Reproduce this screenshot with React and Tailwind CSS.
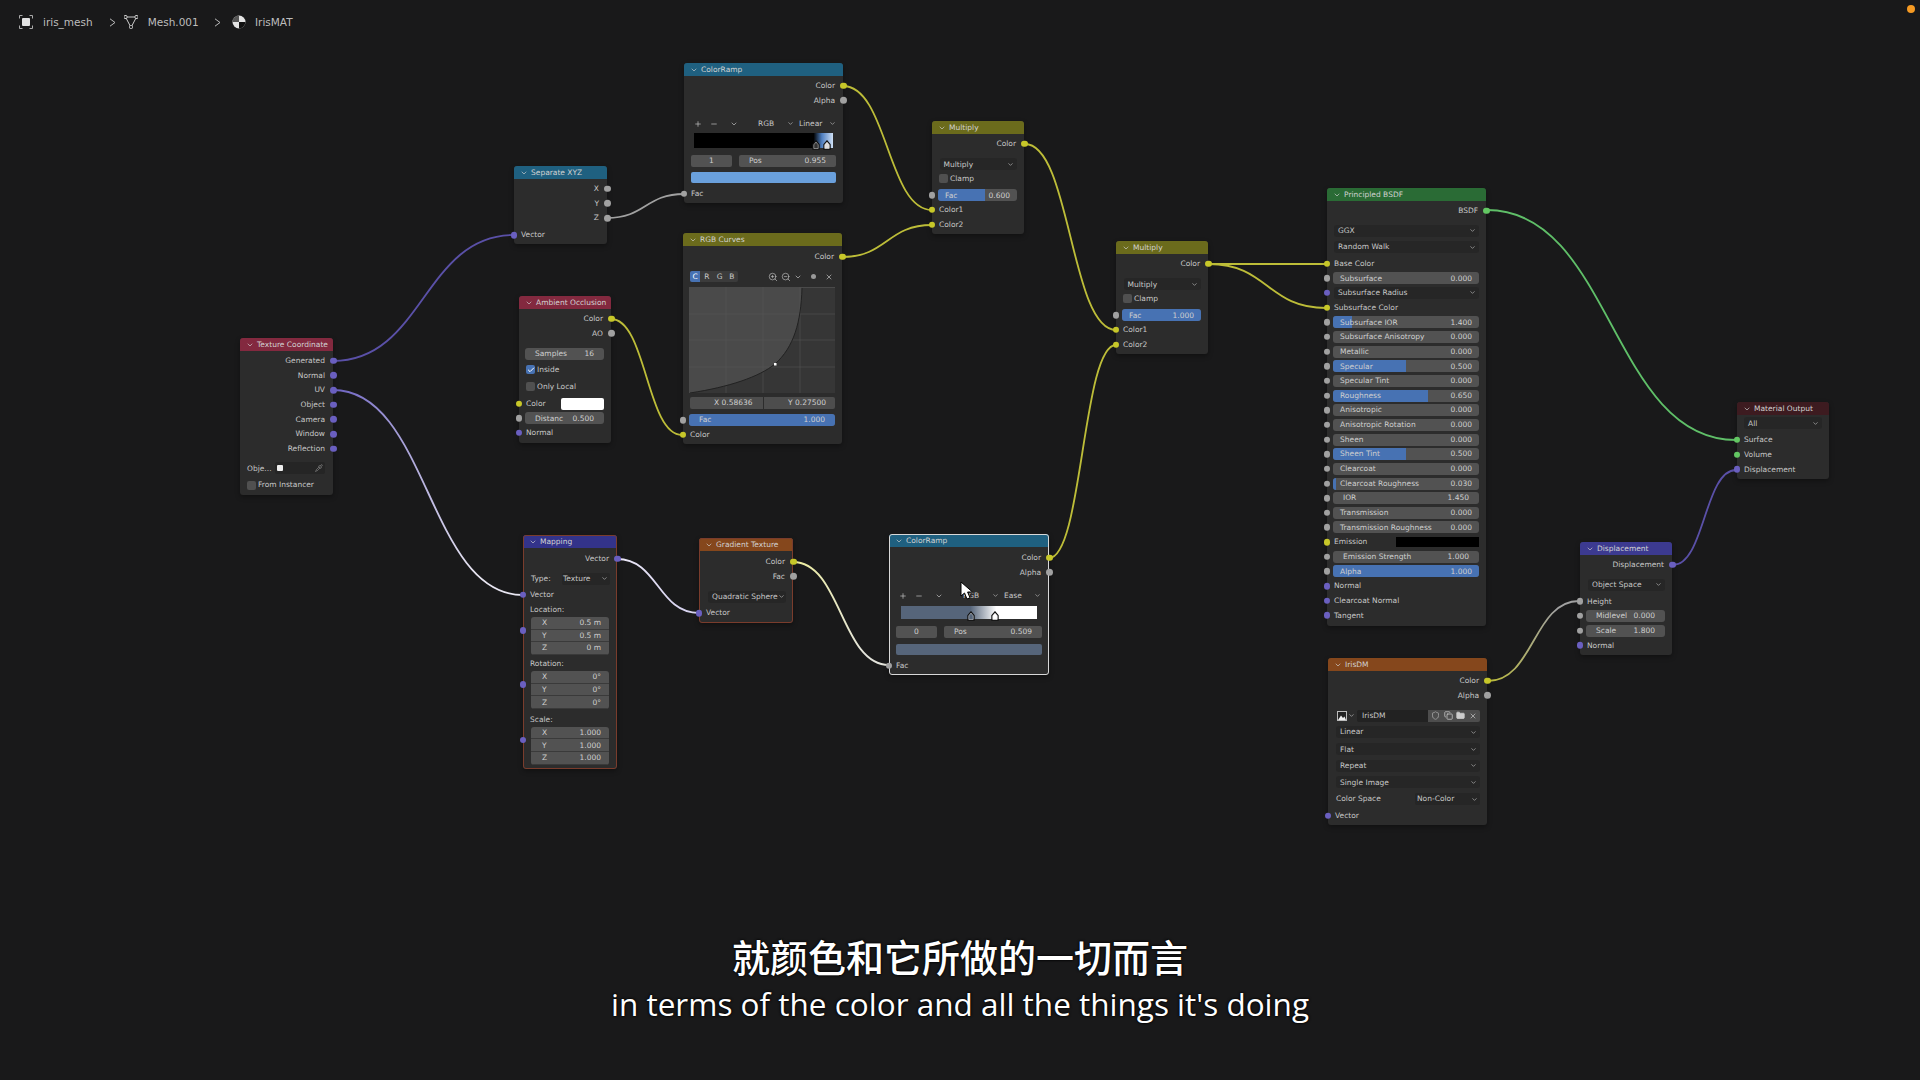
import { ChevronDown, Plus, Minus, X, Check, Pipette, Shield, Copy, Folder, ZoomIn, ZoomOut } from "lucide-react";

const socketColors = {
  yellow: "bg-[#c7c729]",
  grey: "bg-[#a1a1a1]",
  purple: "bg-[#6a5fc0]",
  green: "bg-[#63c763]",
};

const wires = [
  { id: "w1", from: [607, 218], to: [684, 194], a: "#a1a1a1", b: "#a1a1a1" },
  { id: "w2", from: [333, 361], to: [514, 235], a: "#5a50a8", b: "#5a50a8" },
  { id: "w3", from: [333, 390], to: [523, 595], a: "#6a5fc0", b: "#e8e6f2" },
  { id: "w4", from: [611, 319], to: [682, 435], a: "#bdbd38", b: "#bdbd38" },
  { id: "w5", from: [843, 86], to: [932, 210], a: "#bdbd38", b: "#bdbd38" },
  { id: "w6", from: [842, 257], to: [932, 225], a: "#bdbd38", b: "#bdbd38" },
  { id: "w7", from: [1025, 144], to: [1116, 330], a: "#bdbd38", b: "#bdbd38" },
  { id: "w8", from: [1049, 558], to: [1116, 345], a: "#bdbd38", b: "#bdbd38" },
  { id: "w9", from: [1209, 264], to: [1326, 264], a: "#bdbd38", b: "#bdbd38" },
  { id: "w10", from: [1209, 264], to: [1326, 308], a: "#bdbd38", b: "#bdbd38" },
  { id: "w11", from: [1487, 210], to: [1736, 440], a: "#5fbf68", b: "#5fbf68" },
  { id: "w12", from: [1673, 565], to: [1736, 470], a: "#5a50a8", b: "#5a50a8" },
  { id: "w13", from: [1488, 681], to: [1579, 601], a: "#bdbd38", b: "#a1a1a1" },
  { id: "w14", from: [617, 559], to: [699, 613], a: "#ece9f8", b: "#d8d4f0" },
  { id: "w15", from: [793, 562], to: [889, 665], a: "#eded9a", b: "#e4e4dc" },
];

const Socket = ({ color, side }) => (
  <span
    className={`absolute top-1/2 -translate-y-1/2 w-[6.5px] h-[6.5px] rounded-full ${socketColors[color]} ${
      side === "right" ? "right-[-3.5px]" : "left-[-3.5px]"
    }`}
  />
);

const Node = ({ title, head, className, outline, children }) => (
  <div className={`absolute rounded-[3px] bg-[#2c2c2c] shadow-[0_2px_5px_rgba(0,0,0,0.35)] ${outline || ""} ${className}`}>
    <div className={`flex h-[13px] items-center gap-[3px] rounded-t-[3px] pl-[6px] ${head}`}>
      <ChevronDown size={8} strokeWidth={2} className="text-[#d0d0d0] shrink-0" />
      <span className="text-[#d2d2d2] whitespace-nowrap">{title}</span>
    </div>
    <div className="pt-[2.5px]">{children}</div>
  </div>
);

const Out = ({ label, color, className }) => (
  <div className={`relative flex h-[14.67px] items-center justify-end pr-[8px] ${className || ""}`}>
    <span>{label}</span>
    <Socket color={color} side="right" />
  </div>
);

const In = ({ label, color, className }) => (
  <div className={`relative flex h-[14.67px] items-center pl-[7px] ${className || ""}`}>
    <span>{label}</span>
    <Socket color={color} side="left" />
  </div>
);

const Field = ({ label, value, fill, inset, className }) => (
  <div className={`relative flex h-[12px] items-center justify-between overflow-hidden rounded-[3px] bg-[#525252] ${inset ? "px-[10px]" : "px-[7px]"} ${className || ""}`}>
    {fill ? <span className="absolute inset-y-0 left-0 bg-[#4772b3]" style={{ width: `${fill}%` }} /> : null}
    <span className="relative whitespace-nowrap text-[#cfcfcf]">{label}</span>
    <span className="relative whitespace-nowrap text-[#cfcfcf]">{value}</span>
  </div>
);

const FieldRow = ({ label, value, fill, inset, socket = "grey", className }) => (
  <div className={`relative flex h-[14.67px] items-center pl-[6px] pr-[7px] ${className || ""}`}>
    <Field label={label} value={value} fill={fill} inset={inset} className="w-full" />
    {socket ? <Socket color={socket} side="left" /> : null}
  </div>
);

const Select = ({ label, className, socket }) => (
  <div className={`relative flex h-[14.67px] items-center pr-[7px] ${className || "pl-[7px]"}`}>
    <div className="flex h-[12px] w-full items-center justify-between rounded-[3px] bg-[#262626] pl-[4px] pr-[3px]">
      <span className="whitespace-nowrap">{label}</span>
      <ChevronDown size={7} strokeWidth={2} className="shrink-0" />
    </div>
    {socket ? <Socket color={socket} side="left" /> : null}
  </div>
);

const CheckRow = ({ label, on, className }) => (
  <div className={`flex h-[14.67px] items-center gap-[2px] pl-[7px] ${className || ""}`}>
    <span className={`flex h-[9px] w-[9px] items-center justify-center rounded-[2px] ${on ? "bg-[#4772b3]" : "bg-[#505050]"}`}>
      {on ? <Check size={8} strokeWidth={3} className="text-white" /> : null}
    </span>
    <span>{label}</span>
  </div>
);

const Group = ({ rows }) => (
  <div className="relative ml-[8px] mr-[8px] flex h-[38px] flex-col overflow-hidden rounded-[3px]">
    {rows.map(([k, v]) => (
      <div key={k} className="flex h-[12.67px] items-center justify-between border-b border-[#3a3a3a] bg-[#525252] pl-[11px] pr-[8px]">
        <span className="text-[#cfcfcf]">{k}</span>
        <span className="text-[#cfcfcf]">{v}</span>
      </div>
    ))}
  </div>
);

const GroupSocket = () => (
  <div className="relative h-0">
    <span className="absolute left-[-3.5px] top-[10px] h-[6.5px] w-[6.5px] rounded-full bg-[#6a5fc0]" />
  </div>
);

const RampTools = ({ mode, interp, className }) => (
  <div className={`flex h-[14.67px] items-center pl-[10px] ${className || ""}`}>
    <Plus size={8} strokeWidth={2} className="shrink-0" />
    <Minus size={8} strokeWidth={2} className="ml-[8px] shrink-0" />
    <ChevronDown size={8} strokeWidth={2} className="ml-[12px] shrink-0" />
    <span className="ml-[20px] w-[29px]">{mode}</span>
    <ChevronDown size={7} strokeWidth={2} className="shrink-0" />
    <span className="ml-[5px] w-[30px]">{interp}</span>
    <ChevronDown size={7} strokeWidth={2} className="shrink-0" />
  </div>
);

const Handle = ({ fill, className }) => (
  <svg width="8" height="10" viewBox="0 0 8 10" className={`absolute bottom-[-2px] ${className}`}>
    <path d="M1 9V4.5L4 1l3 3.5V9z" fill={fill} stroke="#111" strokeWidth="1.4" />
    <path d="M1.8 8.5V4.8L4 2l2.2 2.8v3.7z" fill={fill} stroke="#ddd" strokeWidth="0.5" />
  </svg>
);

const IndexRow = ({ index, pos, className }) => (
  <div className={`flex h-[14.67px] items-center gap-[7px] pl-[7px] pr-[7px] ${className || ""}`}>
    <div className="flex h-[12px] w-[41px] items-center justify-center rounded-[2px] bg-[#525252] text-[#cfcfcf]">{index}</div>
    <div className="flex h-[12px] flex-1 items-center justify-between rounded-[2px] bg-[#525252] px-[10px] text-[#cfcfcf]">
      <span>Pos</span>
      <span>{pos}</span>
    </div>
  </div>
);

const CurveGraph = () => (
  <svg width="146" height="106" viewBox="0 0 146 106" className="ml-[6px] mt-[3px] block">
    <rect width="146" height="106" fill="#4a4a4a" />
    <path d="M1 106C40 100 70 90 86 77 105 60 112 35 113 1H146V106Z" fill="#363636" />
    <g stroke="#565656" strokeWidth="0.6">
      <path d="M37 0V106M74 0V106M111 0V106M0 27H146M0 53H146M0 80H146" />
    </g>
    <path d="M1 106C40 100 70 90 86 77 105 60 112 35 113 1" fill="none" stroke="#222" strokeWidth="1" />
    <rect x="85" y="76" width="2.5" height="2.5" fill="#fff" />
  </svg>
);

const Subtitle = () => (
  <div className="absolute inset-x-0 top-[933px] flex flex-col items-center text-white [text-shadow:0_0_3px_#000,0_0_2px_#000]">
    <div className="text-[38px] font-medium leading-[46px] font-['Noto_Sans_CJK_SC','Noto_Sans',sans-serif]">就颜色和它所做的一切而言</div>
    <div className="mt-[4px] text-[31.5px] leading-[42px] font-['Open_Sans','Noto_Sans',sans-serif]">in terms of the color and all the things it's doing</div>
  </div>
);

const TopBar = () => (
  <div className="flex h-[44px] items-center pl-[19px] text-[10.5px] text-[#bdbdbd]">
    <svg width="14" height="14" viewBox="0 0 14 14" className="shrink-0">
      <path d="M.5 3.5v-3h3M10.5.5h3v3M13.5 10.5v3h-3M3.5 13.5h-3v-3" fill="none" stroke="#aaa" strokeWidth="1" />
      <rect x="3" y="3" width="8" height="8" rx="1" fill="#e2e2e2" />
    </svg>
    <span className="ml-[10px] w-[50px]">iris_mesh</span>
    <span className="ml-[15.5px]">
      <svg width="7" height="9" viewBox="0 0 7 9"><path d="M1 .8 6 4.5 1 8.2" fill="none" stroke="#bbb" strokeWidth="1" /></svg>
    </span>
    <svg width="14" height="14" viewBox="0 0 14 14" className="ml-[8.5px] shrink-0">
      <path d="M1.5 2H12.5L7 12.5Z" fill="none" stroke="#ccc" strokeWidth="1" />
      <rect x="0" y="0.5" width="3" height="3" rx="1" fill="#222" stroke="#ccc" />
      <rect x="11" y="0.5" width="3" height="3" rx="1" fill="#222" stroke="#ccc" />
      <rect x="5.5" y="10.5" width="3" height="3" rx="1" fill="#222" stroke="#ccc" />
    </svg>
    <span className="ml-[9.7px] w-[52px]">Mesh.001</span>
    <span className="ml-[14.8px]">
      <svg width="7" height="9" viewBox="0 0 7 9"><path d="M1 .8 6 4.5 1 8.2" fill="none" stroke="#bbb" strokeWidth="1" /></svg>
    </span>
    <svg width="14" height="14" viewBox="0 0 14 14" className="ml-[10.5px] shrink-0">
      <circle cx="7" cy="7" r="6.5" fill="#e4e4e4" />
      <path d="M7 7V.5A6.5 6.5 0 0 0 .5 7Z" fill="#555" />
      <path d="M7 7H13.5A6.5 6.5 0 0 1 7 13.5Z" fill="#111" />
    </svg>
    <span className="ml-[9px]">IrisMAT</span>
  </div>
);

const App = () => {
  return (
    <div className="relative h-[1080px] w-[1920px] overflow-hidden bg-[#19191a] font-['DejaVu_Sans',sans-serif] text-[7.5px] leading-none text-[#c8c8c8]">
      <TopBar />
      <span className="absolute right-[5px] top-[5px] h-[8px] w-[8px] rounded-full bg-[#f59a23]" />

      <svg width="1920" height="1080" className="absolute inset-0">
        <defs>
          {wires.map((w) => (
            <linearGradient key={w.id} id={w.id} gradientUnits="userSpaceOnUse" x1={w.from[0]} y1="0" x2={w.to[0]} y2="0">
              <stop offset="0" stopColor={w.a} />
              <stop offset="0.75" stopColor={w.b} />
            </linearGradient>
          ))}
        </defs>
        {wires.map((w) => {
          const c = (w.to[0] - w.from[0]) * 0.5;
          return (
            <path
              key={w.id}
              d={`M${w.from[0]} ${w.from[1]}C${w.from[0] + c} ${w.from[1]} ${w.to[0] - c} ${w.to[1]} ${w.to[0]} ${w.to[1]}`}
              fill="none"
              stroke={`url(#${w.id})`}
              strokeWidth="1.8"
            />
          );
        })}
      </svg>

      <Node title="Texture Coordinate" head="bg-[#83293f]" className="left-[240px] top-[338px] h-[157px] w-[93px]">
        {["Generated", "Normal", "UV", "Object", "Camera", "Window", "Reflection"].map((l) => (
          <Out key={l} label={l} color="purple" />
        ))}
        <div className="mt-[5px] flex h-[14.67px] items-center pl-[7px] pr-[8px]">
          <span className="w-[28px]">Obje...</span>
          <div className="flex h-[12px] flex-1 items-center justify-between rounded-[2px] bg-[#252525] px-[2px]">
            <span className="h-[6px] w-[6px] rounded-[1px] bg-[#eee]" />
            <Pipette size={8} className="text-[#888]" />
          </div>
        </div>
        <CheckRow label="From Instancer" className="mt-[2px]" />
      </Node>

      <Node title="Separate XYZ" head="bg-[#1f6080]" className="left-[514px] top-[166px] h-[78px] w-[93px]">
        <Out label="X" color="grey" />
        <Out label="Y" color="grey" />
        <Out label="Z" color="grey" />
        <In label="Vector" color="purple" className="mt-[2.4px]" />
      </Node>

      <Node title="Ambient Occlusion" head="bg-[#83293f]" className="left-[519px] top-[296px] h-[147px] w-[92px]">
        <Out label="Color" color="yellow" />
        <Out label="AO" color="grey" />
        <FieldRow label="Samples" value="16" inset socket={null} className="mt-[5.5px]" />
        <CheckRow label="Inside" on className="mt-[1.6px]" />
        <CheckRow label="Only Local" className="mt-[2.4px]" />
        <div className="relative mt-[2px] flex h-[14.67px] items-center pl-[7px] pr-[7px]">
          <span className="flex-1">Color</span>
          <span className="h-[12px] w-[43px] rounded-[2px] bg-white" />
          <Socket color="yellow" side="left" />
        </div>
        <FieldRow label="Distanc" value="0.500" inset />
        <In label="Normal" color="purple" />
      </Node>

      <Node title="ColorRamp" head="bg-[#1f6080]" className="left-[684px] top-[63px] h-[140px] w-[159px]">
        <Out label="Color" color="yellow" />
        <Out label="Alpha" color="grey" />
        <RampTools mode="RGB" interp="Linear" className="mt-[8.5px]" />
        <div className="relative ml-[10px] mt-[2px] h-[15px] w-[139px] bg-[linear-gradient(90deg,#000_0%,#000_86%,#4f7fc0_92%,#cfe0f5_100%)]">
          <Handle fill="#333" className="left-[118px]" />
          <Handle fill="#ddd" className="left-[129px]" />
        </div>
        <IndexRow index="1" pos="0.955" className="mt-[5.4px]" />
        <div className="ml-[7px] mt-[4px] h-[11px] w-[145px] rounded-[2px] bg-[#6aa0dc]" />
        <In label="Fac" color="grey" className="mt-[3.4px]" />
      </Node>

      <Node title="RGB Curves" head="bg-[#6b6b1c]" className="left-[683px] top-[233px] h-[211px] w-[159px]">
        <Out label="Color" color="yellow" className="mt-[1px]" />
        <div className="mt-[5.4px] flex h-[14.67px] items-center pl-[7px] pr-[9px]">
          <div className="flex h-[11px] overflow-hidden rounded-[2px] bg-[#3b3b3b]">
            <span className="flex w-[11px] items-center justify-center bg-[#4772b3] text-white">C</span>
            <span className="flex w-[14px] items-center justify-center">R</span>
            <span className="flex w-[13px] items-center justify-center">G</span>
            <span className="flex w-[13px] items-center justify-center">B</span>
          </div>
          <ZoomIn size={10} strokeWidth={1.5} className="ml-[30px] shrink-0" />
          <ZoomOut size={10} strokeWidth={1.5} className="ml-[3px] shrink-0" />
          <ChevronDown size={8} strokeWidth={2} className="ml-[3px] shrink-0" />
          <span className="ml-[9px] h-[5px] w-[5px] shrink-0 rounded-full bg-[#999]" />
          <X size={8} strokeWidth={2} className="ml-[9px] shrink-0" />
        </div>
        <CurveGraph />
        <div className="mt-[2.7px] flex h-[14.67px] items-center pl-[7px] pr-[7px]">
          <div className="flex h-[12px] w-full overflow-hidden rounded-[2px] text-[#cfcfcf]">
            <span className="flex flex-1 items-center justify-end border-r border-[#2c2c2c] bg-[#4d4d4d] pr-[10px]">X 0.58636</span>
            <span className="flex flex-1 items-center justify-end bg-[#4d4d4d] pr-[9px]">Y 0.27500</span>
          </div>
        </div>
        <FieldRow label="Fac" value="1.000" fill={100} inset className="mt-[2.3px]" />
        <In label="Color" color="yellow" />
      </Node>

      <Node title="Multiply" head="bg-[#6b6b1c]" className="left-[932px] top-[121px] h-[113px] w-[92px]">
        <Out label="Color" color="yellow" />
        <Select label="Multiply" className="mt-[5.8px] pl-[7.5px]" />
        <CheckRow label="Clamp" />
        <FieldRow label="Fac" value="0.600" fill={59} className="mt-[1.7px]" />
        <In label="Color1" color="yellow" />
        <In label="Color2" color="yellow" />
      </Node>

      <Node title="Multiply" head="bg-[#6b6b1c]" className="left-[1116px] top-[241px] h-[113px] w-[92px]">
        <Out label="Color" color="yellow" />
        <Select label="Multiply" className="mt-[5.8px] pl-[7.5px]" />
        <CheckRow label="Clamp" />
        <FieldRow label="Fac" value="1.000" fill={100} className="mt-[1.7px]" />
        <In label="Color1" color="yellow" />
        <In label="Color2" color="yellow" />
      </Node>

      <Node title="Mapping" head="bg-[#33338a]" outline="outline outline-1 -outline-offset-1 outline-[#7a3c2c]" className="left-[523px] top-[535px] h-[234px] w-[94px]">
        <Out label="Vector" color="purple" className="mt-[1px]" />
        <div className="mt-[5.2px] flex h-[14.67px] items-center pl-[8px] pr-[7px]">
          <span className="w-[31px]">Type:</span>
          <div className="flex h-[12px] flex-1 items-center justify-between rounded-[2px] bg-[#262626] pl-[1px] pr-[2px]">
            <span>Texture</span>
            <ChevronDown size={7} strokeWidth={2} />
          </div>
        </div>
        <In label="Vector" color="purple" className="mt-[1.4px]" />
        <div className="mt-[0.4px] flex h-[14.67px] items-center pl-[7px]">Location:</div>
        <GroupSocket />
        <Group rows={[["X", "0.5 m"], ["Y", "0.5 m"], ["Z", "0 m"]]} />
        <div className="mt-[1.4px] flex h-[14.67px] items-center pl-[7px]">Rotation:</div>
        <GroupSocket />
        <Group rows={[["X", "0°"], ["Y", "0°"], ["Z", "0°"]]} />
        <div className="mt-[3px] flex h-[14.67px] items-center pl-[7px]">Scale:</div>
        <GroupSocket />
        <Group rows={[["X", "1.000"], ["Y", "1.000"], ["Z", "1.000"]]} />
      </Node>

      <Node title="Gradient Texture" head="bg-[#85471c]" outline="outline outline-1 -outline-offset-1 outline-[#7a3c2c]" className="left-[699px] top-[538px] h-[85px] w-[94px]">
        <Out label="Color" color="yellow" className="mt-[1px]" />
        <Out label="Fac" color="grey" />
        <Select label="Quadratic Sphere" className="mt-[5.7px] pl-[9px]" />
        <In label="Vector" color="purple" className="mt-[1.7px]" />
      </Node>

      <Node title="ColorRamp" head="bg-[#1f6080]" outline="outline outline-1 -outline-offset-1 outline-[#d8d8d8]" className="left-[889px] top-[534px] h-[141px] w-[160px]">
        <Out label="Color" color="yellow" className="mt-[1px]" />
        <Out label="Alpha" color="grey" />
        <RampTools mode="RGB" interp="Ease" className="mt-[8.7px]" />
        <div className="relative ml-[12px] mt-[2.7px] h-[13.3px] w-[136px] bg-[linear-gradient(90deg,#56657a_0%,#56657a_51%,#ffffff_70%,#ffffff_100%)]">
          <Handle fill="#56657a" className="left-[66px]" />
          <Handle fill="#ffffff" className="left-[90px]" />
        </div>
        <IndexRow index="0" pos="0.509" className="mt-[5.7px]" />
        <div className="ml-[7px] mt-[4.5px] h-[11px] w-[146px] rounded-[2px] bg-[#56657a]" />
        <In label="Fac" color="grey" className="mt-[3.2px]" />
      </Node>

      <Node title="Principled BSDF" head="bg-[#2a6b35]" className="left-[1327px] top-[188px] h-[438px] w-[159px]">
        <Out label="BSDF" color="green" />
        <Select label="GGX" className="mt-[5.2px] pl-[7px]" />
        <Select label="Random Walk" className="mt-[1.7px] pl-[7px]" />
        <In label="Base Color" color="yellow" className="mt-[2px]" />
        <FieldRow label="Subsurface" value="0.000" />
        <Select label="Subsurface Radius" socket="purple" />
        <In label="Subsurface Color" color="yellow" />
        <FieldRow label="Subsurface IOR" value="1.400" fill={13} />
        <FieldRow label="Subsurface Anisotropy" value="0.000" />
        <FieldRow label="Metallic" value="0.000" />
        <FieldRow label="Specular" value="0.500" fill={50} />
        <FieldRow label="Specular Tint" value="0.000" />
        <FieldRow label="Roughness" value="0.650" fill={65} />
        <FieldRow label="Anisotropic" value="0.000" />
        <FieldRow label="Anisotropic Rotation" value="0.000" />
        <FieldRow label="Sheen" value="0.000" />
        <FieldRow label="Sheen Tint" value="0.500" fill={50} />
        <FieldRow label="Clearcoat" value="0.000" />
        <FieldRow label="Clearcoat Roughness" value="0.030" fill={2} />
        <FieldRow label="IOR" value="1.450" inset />
        <FieldRow label="Transmission" value="0.000" />
        <FieldRow label="Transmission Roughness" value="0.000" />
        <div className="relative flex h-[14.67px] items-center pl-[7px] pr-[7px]">
          <span className="flex-1">Emission</span>
          <span className="h-[10px] w-[83px] bg-black" />
          <Socket color="yellow" side="left" />
        </div>
        <FieldRow label="Emission Strength" value="1.000" inset />
        <FieldRow label="Alpha" value="1.000" fill={100} />
        <In label="Normal" color="purple" />
        <In label="Clearcoat Normal" color="purple" />
        <In label="Tangent" color="purple" />
      </Node>

      <Node title="IrisDM" head="bg-[#85471c]" className="left-[1328px] top-[658px] h-[167px] w-[159px]">
        <Out label="Color" color="yellow" />
        <Out label="Alpha" color="grey" />
        <div className="mt-[5.6px] flex h-[14.67px] items-center pl-[9px] pr-[7px]">
          <svg width="10" height="10" viewBox="0 0 10 10" className="shrink-0">
            <rect x="0.5" y="0.5" width="9" height="9" fill="#222" stroke="#bbb" />
            <path d="M1 9 4 4.5 6 7 7.5 5.5 9 9Z" fill="#eee" />
          </svg>
          <ChevronDown size={7} strokeWidth={2} className="ml-[1px] shrink-0" />
          <span className="ml-[2px] flex h-[12px] w-[71px] items-center rounded-l-[2px] bg-[#222] pl-[5px]">IrisDM</span>
          <div className="flex h-[12px] flex-1 items-center justify-around rounded-r-[2px] bg-[#4d4d4d] px-[1px]">
            <Shield size={9} className="text-[#aaa]" />
            <Copy size={9} className="text-[#ccc]" />
            <Folder size={9} className="fill-[#ccc] text-[#ccc]" />
            <X size={8} className="text-[#ccc]" />
          </div>
        </div>
        <Select label="Linear" className="mt-[1.7px] pl-[8px]" />
        <Select label="Flat" className="mt-[2.7px] pl-[8px]" />
        <Select label="Repeat" className="mt-[1.7px] pl-[8px]" />
        <Select label="Single Image" className="mt-[2px] pl-[8px]" />
        <div className="mt-[2px] flex h-[14.67px] items-center pl-[8px] pr-[7px]">
          <span className="flex-1">Color Space</span>
          <div className="flex h-[12px] w-[65px] items-center justify-between rounded-[2px] bg-[#262626] px-[2px]">
            <span>Non-Color</span>
            <ChevronDown size={7} strokeWidth={2} />
          </div>
        </div>
        <In label="Vector" color="purple" className="mt-[2px]" />
      </Node>

      <Node title="Displacement" head="bg-[#3c3a90]" className="left-[1580px] top-[542px] h-[113px] w-[92px]">
        <Out label="Displacement" color="purple" />
        <Select label="Object Space" className="mt-[5.2px] pl-[8px]" />
        <In label="Height" color="grey" className="mt-[2px]" />
        <FieldRow label="Midlevel" value="0.000" inset />
        <FieldRow label="Scale" value="1.800" inset />
        <In label="Normal" color="purple" />
      </Node>

      <Node title="Material Output" head="bg-[#3d1b20]" className="left-[1737px] top-[402px] h-[77px] w-[92px]">
        <Select label="All" className="mt-[-1.5px] pl-[7px]" />
        <In label="Surface" color="green" className="mt-[2px]" />
        <In label="Volume" color="green" />
        <In label="Displacement" color="purple" />
      </Node>

      {/* mouse pointer */}
      <svg width="16" height="20" viewBox="0 0 16 20" className="absolute left-[960px] top-[581px]">
        <path d="M1 1V15L4.5 12 7 18 10 16.8 7.6 11H12.5Z" fill="#fff" stroke="#000" strokeWidth="1" />
      </svg>

      <Subtitle />
    </div>
  );
};

export default App;
